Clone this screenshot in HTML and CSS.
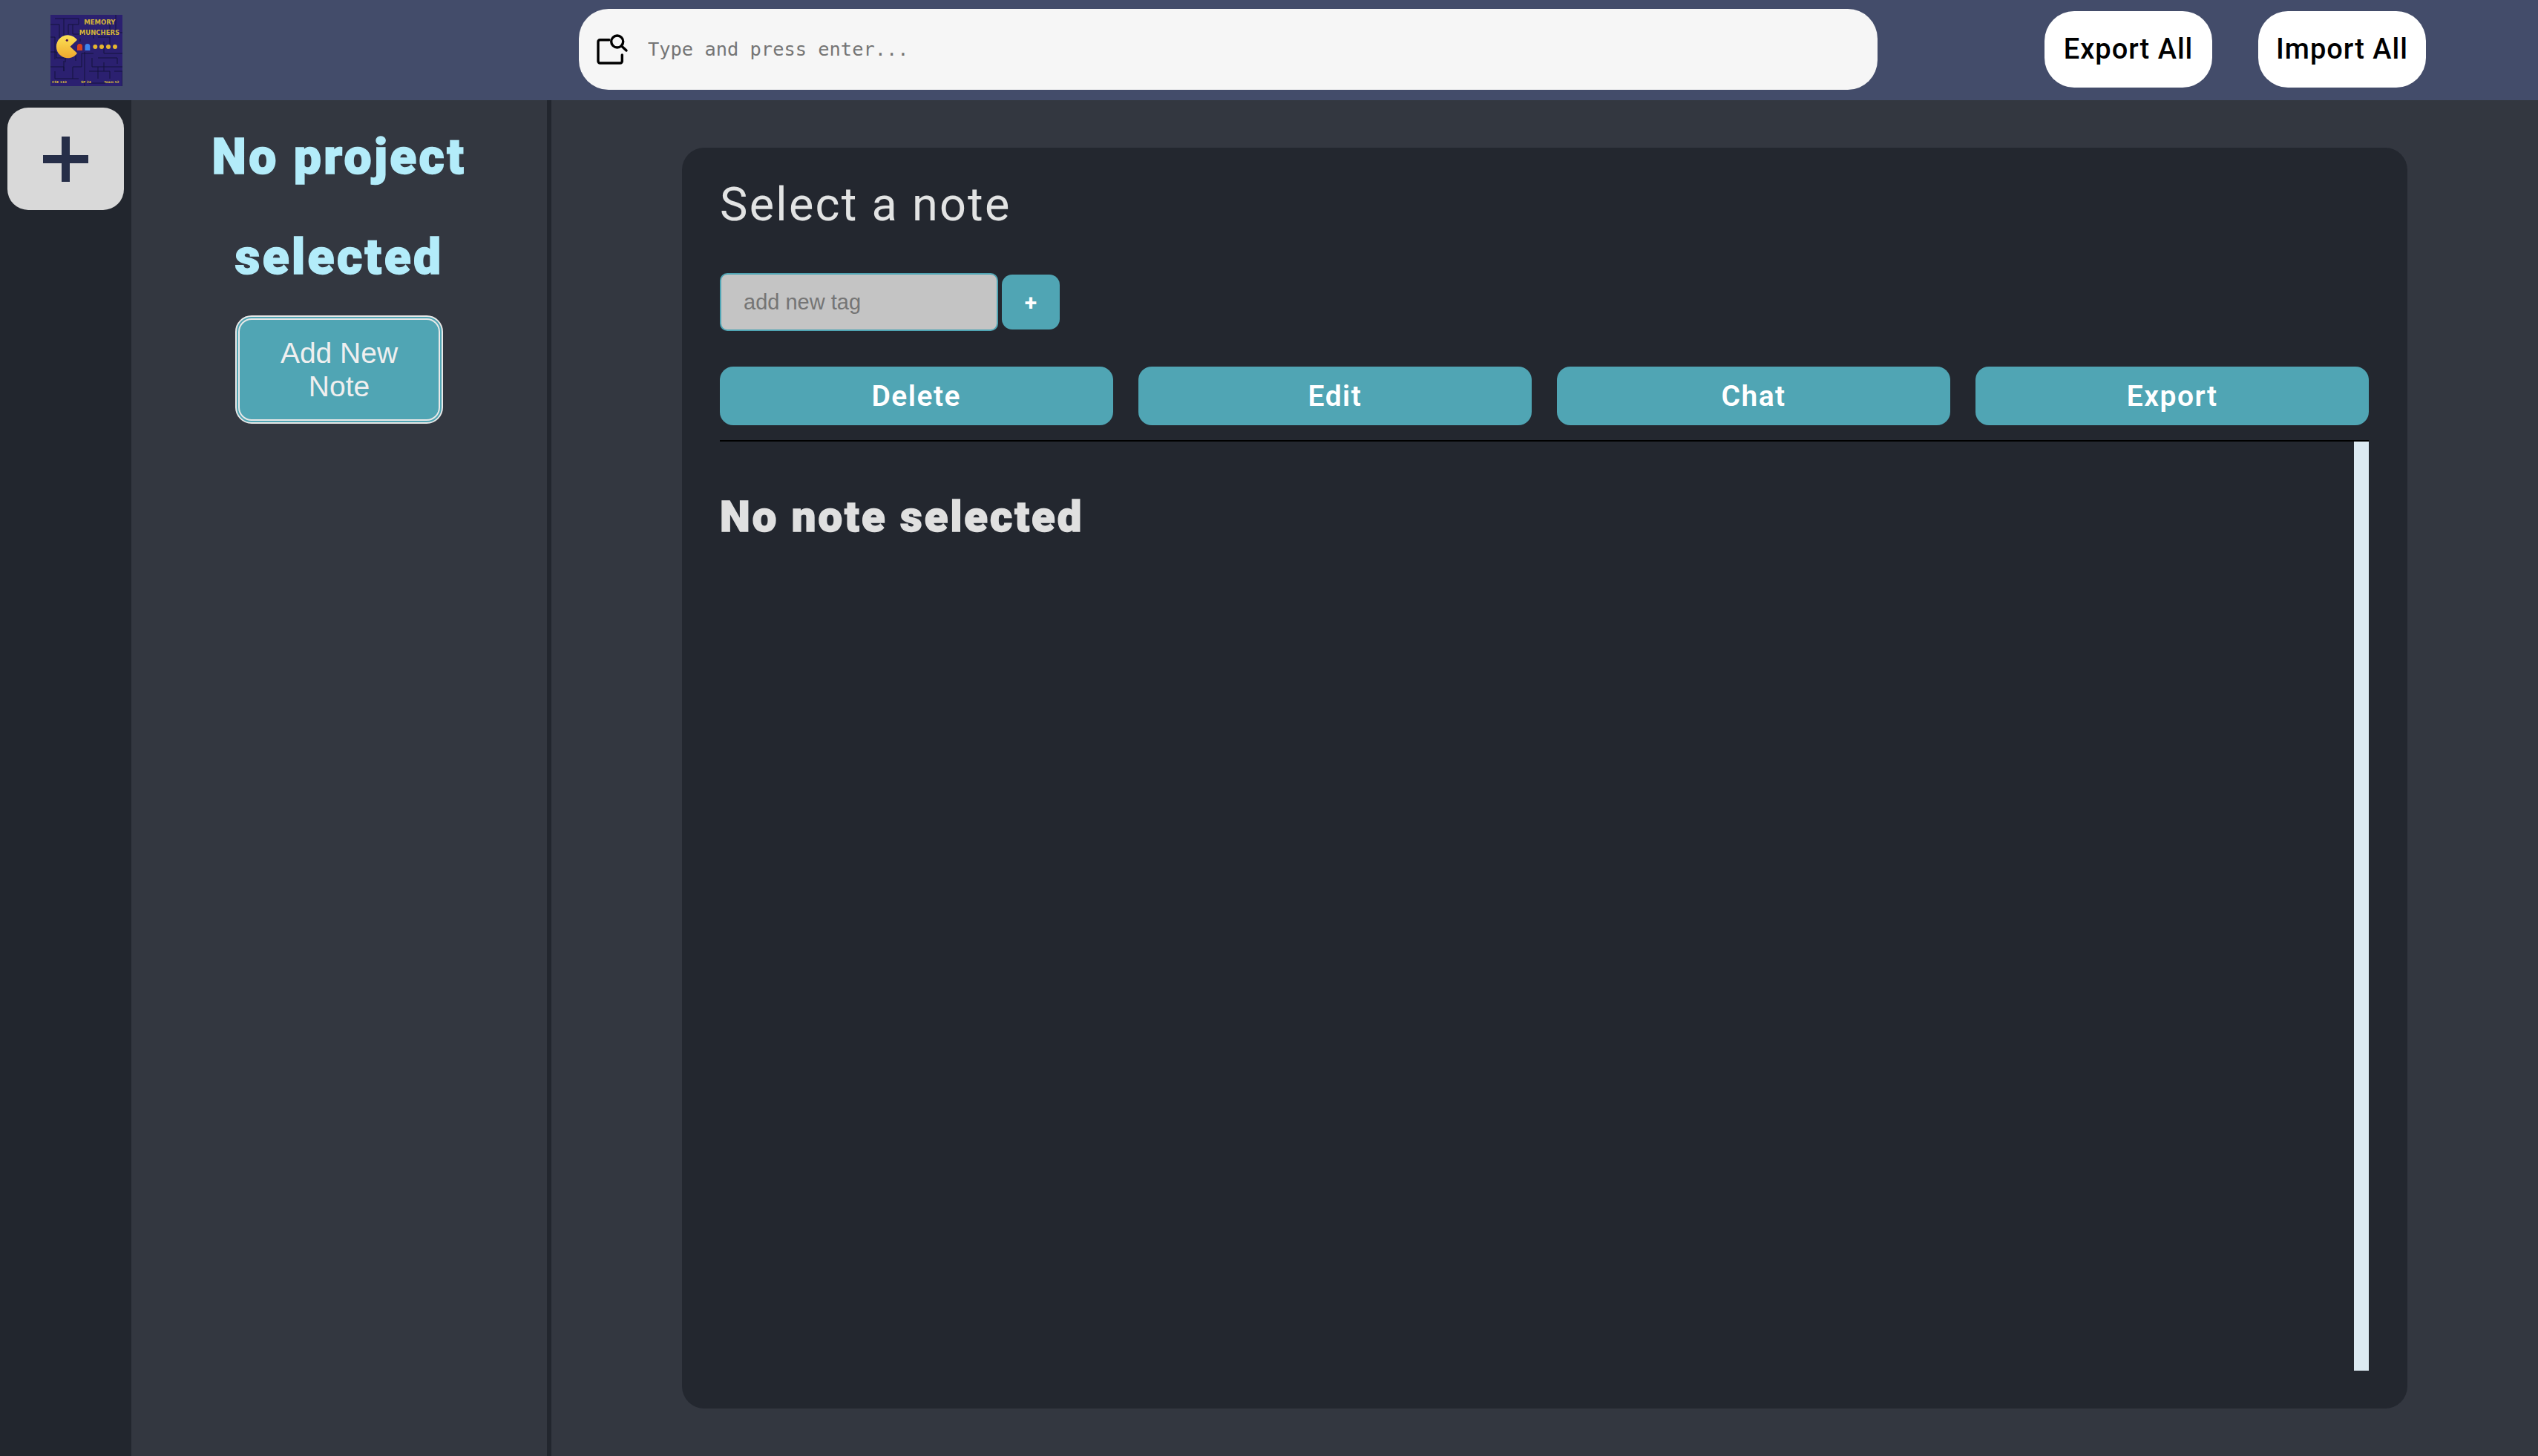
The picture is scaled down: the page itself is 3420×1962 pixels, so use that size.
FILE: index.html
```html
<!DOCTYPE html>
<html lang="en">
<head>
<meta charset="utf-8">
<title>Memory Munchers</title>
<link rel="stylesheet" href="styles.css">
</head>
<body>
<header class="topbar">
  <svg class="logo" viewBox="0 0 97 96" aria-label="Memory Munchers logo">
    <rect width="97" height="96" fill="#2b2070"/>
    <path class="maze" d="M0 13H12V32M6 5H38V13H24V26M18 5V40M30 13V26H46M38 22H58V32M0 50H8V58H20V64M64 30H80V44M72 36V52H97M88 0V24M80 13V24H97M46 50V96M58 52H42V70H30V86M0 70H18V76M6 76V86H38M18 62V76M24 52H34V62M56 58V70H97M64 58H90V66M64 70V86M52 76H80V86M86 76H97V96M52 92H74M0 30H6V60M40 32V36M72 76V64"/>
    <defs>
      <linearGradient id="pac" x1="0" y1="0" x2="0" y2="1"><stop offset="0" stop-color="#fbe356"/><stop offset="1" stop-color="#f0a92e"/></linearGradient>
    </defs>
    <path d="M26.500 42.800L36 33.800A15.500 15.500 0 1 0 36 51.800Z" fill="url(#pac)"/>
    <circle cx="22.300" cy="34.300" r="1.600" fill="#4a1050"/>
    <path d="M36 48V42.400a3.500 3.500 0 0 1 7 0V48z" fill="#d8431f"/>
    <path d="M46.500 48V42.400a3.400 3.400 0 0 1 6.800 0V48z" fill="#3d84ee"/>
    <g fill="#e7b52f">
      <circle cx="60.300" cy="43" r="3"/><circle cx="69" cy="43" r="3"/><circle cx="78" cy="43" r="3"/><circle cx="87" cy="43" r="3"/>
    </g>
    <g class="logo-text">
      <text x="66.300" y="13.300" text-anchor="middle" class="logo-title">MEMORY</text>
      <text x="66" y="27.300" text-anchor="middle" class="logo-title">MUNCHERS</text>
      <text x="2" y="92" class="logo-small">CSE 110</text>
      <text x="41" y="92" class="logo-small">SP 24</text>
      <text x="72.300" y="92" class="logo-small">Team 52</text>
    </g>
  </svg>
  <div class="search">
    <svg class="search-icon" viewBox="0 0 48 48">
      <path d="M21 10.700H8.500A2.500 2.500 0 0 0 6 13.200V39.500A2.500 2.500 0 0 0 8.500 42H35.800A2.500 2.500 0 0 0 38.300 39.500V31"/>
      <circle cx="31.700" cy="13" r="8"/>
      <path d="M37.500 19L44 25"/>
    </svg>
    <input class="search-input" type="text" placeholder="Type and press enter...">
  </div>
  <div class="top-actions">
    <button class="pill">Export All</button>
    <button class="pill">Import All</button>
  </div>
</header>
<div class="body-row">
  <nav class="rail">
    <button class="add-project" aria-label="Add project">
      <svg viewBox="0 0 61 61"><path d="M25 0h11v25h25v11H36v25H25V36H0V25h25z"/></svg>
    </button>
  </nav>
  <aside class="sidebar">
    <h2 class="project-title">No project selected</h2>
    <button class="add-note">Add New Note</button>
  </aside>
  <main class="main">
    <section class="card">
      <h1 class="note-title">Select a note</h1>
      <div class="tag-row">
        <input class="tag-input" type="text" placeholder="add new tag">
        <button class="tag-add">+</button>
      </div>
      <div class="actions">
        <button class="action">Delete</button>
        <button class="action">Edit</button>
        <button class="action">Chat</button>
        <button class="action">Export</button>
      </div>
      <div class="content">
        <div class="content-body"><h2 class="empty">No note selected</h2></div>
        <div class="thumb"></div>
      </div>
    </section>
  </main>
</div>
</body>
</html>
```
FILE: styles.css
```css
* { box-sizing: border-box; }
html, body { margin: 0; height: 100%; }
body {
  display: flex;
  flex-direction: column;
  height: 1962px;
  overflow: hidden;
  background: #333740;
  font-family: "Roboto", sans-serif;
}
button { font-family: inherit; cursor: pointer; border: 0; }

.topbar {
  flex: 0 0 135px;
  display: flex;
  align-items: center;
  background: #434c6a;
  padding-left: 68px;
}
.logo { width: 97px; height: 96px; flex: none; margin-right: 615px; }
.maze { fill: none; stroke: #15123c; stroke-width: 1; }
.logo-text { fill: #d4b53a; font-family: "DejaVu Sans", sans-serif; font-weight: 700; }
.logo-title { font-size: 8.500px; }
.logo-small { font-size: 4.300px; }

.search {
  width: 1750px;
  height: 109px;
  flex: none;
  display: flex;
  align-items: center;
  gap: 25px;
  background: #f6f6f6;
  border-radius: 40px;
  padding-left: 20px;
  margin-top: -2px;
}
.search-icon {
  width: 48px;
  height: 48px;
  flex: none;
  fill: none;
  stroke: #000;
  stroke-width: 3.400;
  stroke-linecap: round;
  stroke-linejoin: round;
}
.search-input {
  flex: 1;
  min-width: 0;
  height: 40px;
  padding: 0;
  margin-top: -1px;
  border: 0;
  outline: 0;
  background: transparent;
  font-family: "DejaVu Sans Mono", monospace;
  font-size: 25.400px;
}
.search-input::placeholder { color: #757575; opacity: 1; }

.top-actions { display: flex; gap: 62px; margin: -2px 0 0 225px; }
.pill {
  width: 226px;
  height: 103px;
  padding: 0 0 2px;
  background: #fff;
  color: #000;
  border-radius: 40px;
  font-size: 38px;
  font-weight: 500;
  font-stretch: 90%;
  letter-spacing: 1px;
}

.body-row { flex: 1; display: flex; min-height: 0; }
.rail {
  flex: 0 0 177px;
  background: #22262e;
  padding: 10px;
}
.add-project {
  display: flex;
  align-items: center;
  justify-content: center;
  width: 157px;
  height: 138px;
  background: #d9d9d9;
  border-radius: 28px;
  padding: 0;
}
.add-project svg { width: 61px; height: 61px; fill: #262e48; }

.sidebar {
  flex: 0 0 566px;
  display: flex;
  flex-direction: column;
  align-items: center;
  background: #333740;
  border-right: 6px solid #22262e;
  padding-top: 9px;
}
.project-title {
  margin: 0 0 11px;
  width: 420px;
  text-align: center;
  color: #b3ecfa;
  font-size: 66px;
  line-height: 135px;
  font-weight: 900;
  letter-spacing: 3.400px;
  -webkit-text-stroke: 1.500px #b3ecfa;
}
.add-note {
  width: 280px;
  height: 146px;
  padding: 0 40px;
  background: #50a5b4;
  color: #efefef;
  border: 6px double #e8e8e8;
  border-radius: 22px;
  font-family: "Liberation Sans", sans-serif;
  font-size: 39px;
  line-height: 45px;
}

.main { flex: 1; padding: 64px 176px 64px 176px; min-width: 0; }
.card {
  height: 1699px;
  display: flex;
  flex-direction: column;
  background: #23272f;
  border-radius: 30px;
  padding: 40px 52px 51px 51px;
}
.note-title {
  margin: 0;
  color: #e2e3e3;
  font-size: 63px;
  line-height: 70px;
  font-weight: 400;
  letter-spacing: 2.250px;
  padding-top: 2px;
  height: 70px;
}
.tag-row { display: flex; align-items: center; gap: 5px; margin-top: 59px; }
.tag-input {
  width: 375px;
  height: 78px;
  padding: 0 30px;
  background: #c4c4c4;
  border: 2px solid #50a5b4;
  border-radius: 10px;
  outline: 0;
  font-family: "Liberation Sans", sans-serif;
  font-size: 29px;
}
.tag-input::placeholder { color: #757575; opacity: 1; }
.tag-add {
  width: 78px;
  height: 74px;
  padding: 0;
  background: #50a5b4;
  color: #fff;
  border-radius: 14px;
  font-size: 30px;
  font-weight: 700;
}
.actions { display: grid; grid-template-columns: repeat(4, 1fr); gap: 34.670px; margin-top: 48px; }
.action {
  height: 79px;
  background: #50a5b4;
  color: #fff;
  border-radius: 18px;
  font-size: 39px;
  font-weight: 600;
  font-stretch: 95%;
  letter-spacing: 1.500px;
}
.content {
  flex: 1;
  display: flex;
  margin-top: 20px;
  border-top: 2px solid #000;
  min-height: 0;
}
.content-body { flex: 1; min-width: 0; }
.empty {
  margin: 66px 0 0;
  color: #e0e0e0;
  font-size: 58px;
  line-height: 70px;
  font-weight: 900;
  letter-spacing: 3px;
  -webkit-text-stroke: 1.500px #e0e0e0;
}
.thumb { flex: 0 0 20px; background: #dceaf2; }
```
